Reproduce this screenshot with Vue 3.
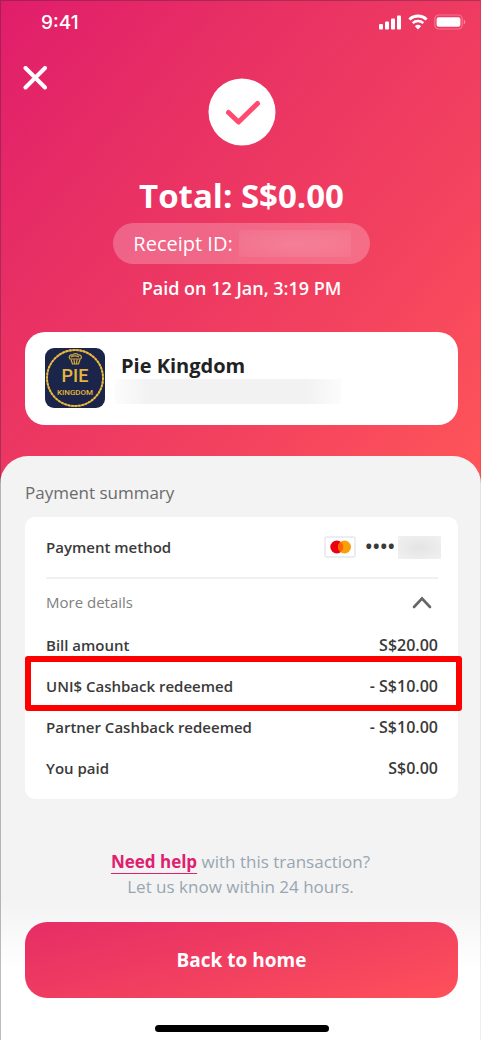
<script setup>
const rows = [
  { label: 'Bill amount', value: 'S$20.00' },
  { label: 'UNI$ Cashback redeemed', value: '- S$10.00', marked: true },
  { label: 'Partner Cashback redeemed', value: '- S$10.00' },
  { label: 'You paid', value: 'S$0.00' },
]
</script>

<template>
  <main class="screen">
    <header class="hero">
      <div class="status">
        <span class="clock">9:41</span>
        <div class="signals">
          <svg width="23" height="16" viewBox="0 0 23 16" fill="#fff" aria-hidden="true">
            <rect x="0" y="10" width="4" height="5.500" rx="1" />
            <rect x="6" y="7.500" width="4" height="8" rx="1" />
            <rect x="12" y="4.500" width="4" height="11" rx="1" />
            <rect x="18" y="1.500" width="4" height="14" rx="1" />
          </svg>
          <svg width="20" height="16" viewBox="0 0 20 16" aria-hidden="true">
            <path d="M1.4 5.4a12.6 12.6 0 0 1 17.2 0" fill="none" stroke="#fff" stroke-width="2.8" />
            <path d="M4.7 9.1a7.8 7.8 0 0 1 10.6 0" fill="none" stroke="#fff" stroke-width="2.6" />
            <path d="M10 15.4 6.9 12.2a4.6 4.6 0 0 1 6.2 0z" fill="#fff" />
          </svg>
          <svg width="32" height="16" viewBox="0 0 32 16" aria-hidden="true">
            <rect x="0.8" y="1" width="27.4" height="14" rx="4" fill="none" stroke="#fff" stroke-opacity=".3" stroke-width="1.2" />
            <rect x="2.6" y="3.200" width="23.800" height="9.600" rx="2" fill="#fff" />
            <path d="M29.8 5.6c2 .9 2 4 0 4.900z" fill="#fff" fill-opacity=".4" />
          </svg>
        </div>
      </div>

      <div class="badge-row">
        <button class="close" type="button" aria-label="Close">
          <svg width="24" height="24" viewBox="0 0 24 24" fill="none" stroke="#fff" stroke-width="4" stroke-linecap="round" aria-hidden="true">
            <path d="M2.500 2 22 21.500M22 2 2.500 21.500" />
          </svg>
        </button>
        <svg class="tick" width="68" height="68" viewBox="0 0 68 68" fill="none" aria-hidden="true">
          <circle cx="34" cy="34" r="33.500" fill="#fff" />
          <path d="M20.500 34.500 30.500 44 49.500 25.500" stroke="#ff4b70" stroke-width="5" stroke-linecap="round" stroke-linejoin="round" />
        </svg>
      </div>

      <h1 class="total">Total: S$0.00</h1>
      <div class="receipt">
        <span>Receipt ID:</span>
        <span class="receipt-mask"></span>
      </div>
      <p class="paid">Paid on 12 Jan, 3:19 PM</p>

      <section class="merchant">
        <svg class="logo" width="60" height="60" viewBox="0 0 60 60" role="img" aria-label="Pie Kingdom logo">
          <rect width="60" height="60" rx="9" fill="#1b2449" />
          <circle cx="30" cy="30" r="28" fill="none" stroke="#c99b36" stroke-width="1.800" />
          <circle cx="30" cy="30" r="28" fill="none" stroke="#ecc04a" stroke-width="1.800" stroke-dasharray="2 1.500" />
          <g fill="none" stroke="#d9aa3c" stroke-width="1.200" stroke-linejoin="round">
            <path d="M25 11c-2-2 0-4.500 2.500-4 1.500-2 5-1.800 6 0 2.500-.6 4 2.500 2 4z" />
            <path d="M26 11.500 27.500 16h6l1.500-4.500M29 11.500l.5 4M32 11.500l-.5 4M26 9c2-1.500 6-1.500 8 0" />
          </g>
          <text class="logo-big" x="30" y="34" text-anchor="middle">PIE</text>
          <text class="logo-small" x="30" y="47" text-anchor="middle">KINGDOM</text>
        </svg>
        <div class="merchant-info">
          <h2>Pie Kingdom</h2>
          <div class="merchant-mask"></div>
        </div>
      </section>
    </header>

    <div class="sheet">
      <h3 class="caption">Payment summary</h3>
      <section class="summary">
        <div class="method">
          <span>Payment method</span>
          <div class="card-number">
            <svg width="32" height="22" viewBox="0 0 32 22" role="img" aria-label="Mastercard">
              <rect x="1" y="1" width="30" height="20" rx="2" fill="#fff" stroke="#e3e9ec" stroke-width="1.500" />
              <circle cx="12.800" cy="11" r="6.500" fill="#eb0010" />
              <circle cx="20.500" cy="11" r="6.500" fill="#f99f0b" />
              <path d="M16.650 5.800a6.500 6.500 0 0 1 0 10.400 6.500 6.500 0 0 1 0-10.400z" fill="#ff6000" />
            </svg>
            <span class="dots">••••</span>
            <span class="card-mask"></span>
          </div>
        </div>
        <button class="more" type="button" aria-expanded="true">
          <span>More details</span>
          <svg width="20" height="14" viewBox="0 0 20 14" fill="none" stroke="#666" stroke-width="2.600" stroke-linecap="round" aria-hidden="true">
            <path d="M2 12 10 3.500l8 8.500" />
          </svg>
        </button>
        <dl class="rows">
          <div v-for="row in rows" :key="row.label" class="row" :class="{ marked: row.marked }">
            <dt>{{ row.label }}</dt>
            <dd>{{ row.value }}</dd>
          </div>
        </dl>
      </section>

      <p class="help">
        <a href="#help">Need help</a> with this transaction?<br />
        Let us know within 24 hours.
      </p>

      <footer class="actions">
        <button class="home" type="button">Back to home</button>
        <div class="home-bar"></div>
      </footer>
    </div>
  </main>
</template>

<style>
body {
  margin: 0;
}
</style>

<style scoped>
.screen {
  position: relative;
  display: flex;
  flex-direction: column;
  min-height: 100vh;
  font-family: "Open Sans", "Noto Sans", sans-serif;
  font-size: 15px;
  color: #333;
}
.screen::after {
  content: "";
  position: absolute;
  inset: 0;
  border-top: 1px solid rgba(40, 30, 50, 0.3);
  border-left: 1px solid rgba(40, 30, 50, 0.3);
  border-right: 1px solid rgba(40, 30, 50, 0.08);
  pointer-events: none;
}
h1, h2, h3, p, dl, dd {
  margin: 0;
}
button {
  padding: 0;
  border: 0;
  background: none;
  font: inherit;
  color: inherit;
  cursor: pointer;
}
svg {
  display: block;
  flex: none;
}
.hero {
  display: flex;
  flex-direction: column;
  align-items: center;
  padding: 0 23px 71px 25px;
  background: linear-gradient(130deg, #e01d6b 0%, #e83064 30%, #f3425f 68%, #ff5658 100%);
  color: #fff;
}
.status {
  align-self: stretch;
  display: flex;
  justify-content: space-between;
  align-items: center;
  height: 44px;
  padding-left: 16px;
  margin-right: -8px;
}
.clock {
  font-family: Inter, sans-serif;
  font-size: 19px;
  font-weight: 500;
}
.signals {
  display: flex;
  gap: 6px;
}
.badge-row {
  align-self: stretch;
  display: grid;
  grid-template-columns: 1fr auto 1fr;
  align-items: start;
  padding-top: 34px;
}
.close {
  justify-self: start;
  margin: -12px 0 0 -2px;
}
.tick {
  grid-column: 2;
}
.total {
  margin-top: 30px;
  font-size: 33px;
  line-height: 40px;
  font-weight: 700;
}
.receipt {
  display: flex;
  align-items: center;
  gap: 6px;
  height: 41px;
  margin-top: 7px;
  padding: 0 19px 0 20px;
  border-radius: 21px;
  background: rgba(255, 255, 255, 0.24);
  font-size: 20px;
}
.receipt-mask {
  width: 112px;
  height: 27px;
  background: radial-gradient(ellipse, rgba(255, 255, 255, 0.14), rgba(255, 255, 255, 0.05));
}
.paid {
  margin-top: 12px;
  font-size: 18px;
  line-height: 24px;
  font-weight: 600;
}
.merchant {
  align-self: stretch;
  display: flex;
  align-items: center;
  gap: 10px;
  margin-top: 32px;
  padding: 16px 20px 17px;
  border-radius: 20px;
  background: #fff;
  color: #222;
}
.merchant-info {
  flex: 1;
}
.merchant h2 {
  padding-left: 6px;
  font-size: 20px;
  line-height: 26px;
  font-weight: 700;
}
.merchant-mask {
  width: 70%;
  height: 25px;
  background: linear-gradient(90deg, #fcfcfc, #f2f2f2 15%, #f2f2f2 85%, #fcfcfc);
}
.logo-big,
.logo-small {
  font-family: Roboto, sans-serif;
  font-weight: 500;
  fill: #e3b540;
}
.logo-big {
  font-size: 18px;
}
.logo-small {
  font-size: 8px;
}
.sheet {
  flex: 1;
  display: flex;
  flex-direction: column;
  margin-top: -40px;
  padding-top: 25px;
  border-radius: 28px 28px 0 0;
  background: #f3f3f3;
}
.caption {
  margin: 0 25px;
  font-size: 17px;
  line-height: 24px;
  font-weight: 400;
  color: #6b6b6b;
}
.summary {
  margin: 12px 23px 0 25px;
  padding: 0 20px 11px 21px;
  border-radius: 10px;
  background: #fff;
  color: #3a3a3a;
}
.method {
  display: flex;
  justify-content: space-between;
  align-items: center;
  height: 60px;
  border-bottom: 2px solid #f0f0f0;
  font-weight: 600;
}
.card-number {
  display: flex;
  align-items: center;
  margin-right: -3px;
}
.dots {
  margin: 0 3px 0 9px;
  font-size: 20px;
  line-height: 22px;
}
.card-mask {
  width: 43px;
  height: 23px;
  background: radial-gradient(ellipse, #e4e4e4, #f1f1f1);
}
.more {
  display: flex;
  justify-content: space-between;
  align-items: center;
  width: 100%;
  height: 45px;
  padding-right: 6px;
  color: #808080;
}
.row {
  position: relative;
  display: flex;
  justify-content: space-between;
  align-items: center;
  min-height: 41px;
  font-weight: 600;
}
.row dd {
  font-size: 16px;
}
.marked::after {
  content: "";
  position: absolute;
  inset: -9px -24px -5px -21px;
  border: 6px solid #f00;
  border-radius: 3px;
}
.help {
  margin-top: 50px;
  font-size: 17px;
  line-height: 25px;
  text-align: center;
  color: #98a6b1;
}
.help a {
  color: #df2070;
  font-weight: 700;
  text-decoration: underline;
  text-decoration-thickness: 1px;
  text-underline-offset: 5px;
}
.actions {
  flex: 1;
  display: flex;
  flex-direction: column;
  align-items: center;
  justify-content: space-between;
  padding: 23px 23px 8px 25px;
  background: linear-gradient(#f3f3f3 0, #fff 70px);
}
.home {
  width: 100%;
  height: 76px;
  border-radius: 22px;
  background: linear-gradient(165deg, #e62d66 0%, #f3425f 60%, #ff505a 100%);
  font-size: 19px;
  font-weight: 700;
  color: #fff;
}
.home-bar {
  width: 174px;
  height: 7px;
  border-radius: 4px;
  background: #000;
}
</style>
